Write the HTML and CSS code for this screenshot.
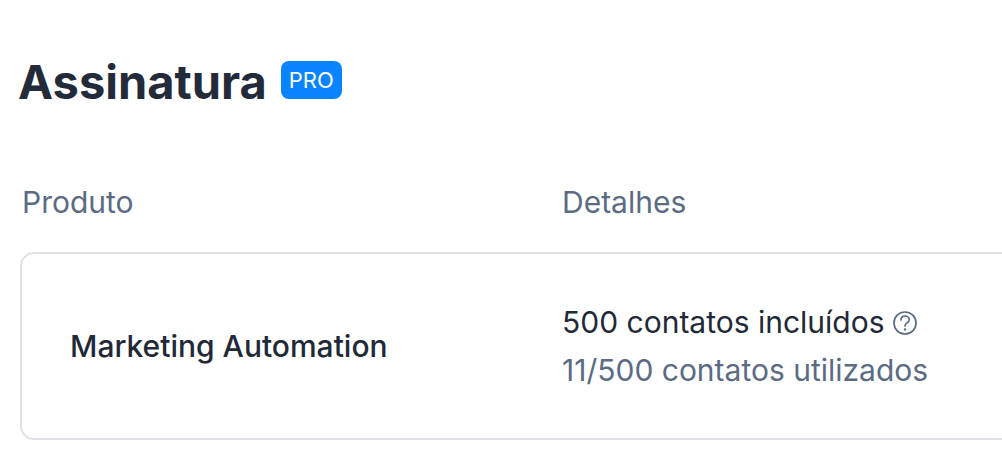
FILE: index.html
```html
<!DOCTYPE html>
<html lang="pt-BR">
<head>
    <meta charset="UTF-8">
    <meta name="viewport" content="width=device-width, initial-scale=1.0">
    <title>Assinatura</title>
    <link rel="stylesheet" href="styles.css">
</head>
<body>
    <main class="subscription">
        <header class="page-header">
            <h1>Assinatura</h1>
            <span class="badge">PRO</span>
        </header>

        <table class="plans">
            <thead>
                <tr>
                    <th scope="col">Produto</th>
                    <th scope="col">Detalhes</th>
                </tr>
            </thead>
            <tbody>
                <tr>
                    <td class="product">Marketing Automation</td>
                    <td class="details">
                        <div class="included">
                            500 contatos incluídos
                            <button type="button" class="help" aria-label="Ajuda">
                                <svg viewBox="0 0 24 24" width="24" height="24" aria-hidden="true">
                                    <circle cx="12" cy="12" r="11"/>
                                    <path d="M8 9C8 6.500 9.700 5 12 5s4.200 1.500 4.200 3.700c0 1.600-.9 2.300-2.200 3.200S12 13.300 12 15"/>
                                    <circle class="dot" cx="12" cy="18.500" r="1.200"/>
                                </svg>
                            </button>
                        </div>
                        <div class="used">11/500 contatos utilizados</div>
                    </td>
                </tr>
            </tbody>
        </table>
    </main>
</body>
</html>
```
FILE: styles.css
```css
body {
    margin: 0;
    background-color: #fff;
    color: #1f2937;
    font-family: Inter, sans-serif;
    font-size: 30px;
    line-height: 48px;
    overflow-x: hidden;
}
.subscription {
    padding: 50px 0 10px 20px;
}
.page-header {
    display: flex;
    align-items: center;
    gap: 14px;
    margin-left: -2px;
}
h1 {
    margin: 0;
    color: #232b3a;
    font-size: 47px;
    font-weight: 700;
    line-height: 64px;
}
.badge {
    margin-bottom: 4px;
    padding: 0 8px;
    border-radius: 8px;
    background-color: #0884ff;
    color: #fff;
    font-size: 22px;
    line-height: 38px;
}
.plans {
    width: calc(100% + 20px);
    margin-top: 64px;
    border-collapse: separate;
    border-spacing: 0;
    table-layout: fixed;
}
th {
    padding: 0 0 26px 2px;
    color: #5b6b83;
    font-weight: 400;
    text-align: left;
}
th:first-child {
    width: 538px;
}
td {
    padding: 44px 0;
    border: 2px solid #dfe3e8;
    border-width: 2px 0;
}
.product {
    padding-left: 48px;
    border-left-width: 2px;
    border-radius: 14px 0 0 14px;
    font-weight: 500;
}
.details {
    padding-left: 2px;
}
.included {
    display: flex;
    align-items: center;
    gap: 8px;
}
.help {
    display: flex;
    padding: 2px 0 0;
    border: none;
    background: none;
    color: #5b6b83;
    cursor: pointer;
}
.help svg {
    fill: none;
    stroke: currentColor;
    stroke-width: 1.7;
    stroke-linecap: round;
}
.help .dot {
    fill: currentColor;
    stroke: none;
}
.used {
    color: #5b6b83;
}
```
